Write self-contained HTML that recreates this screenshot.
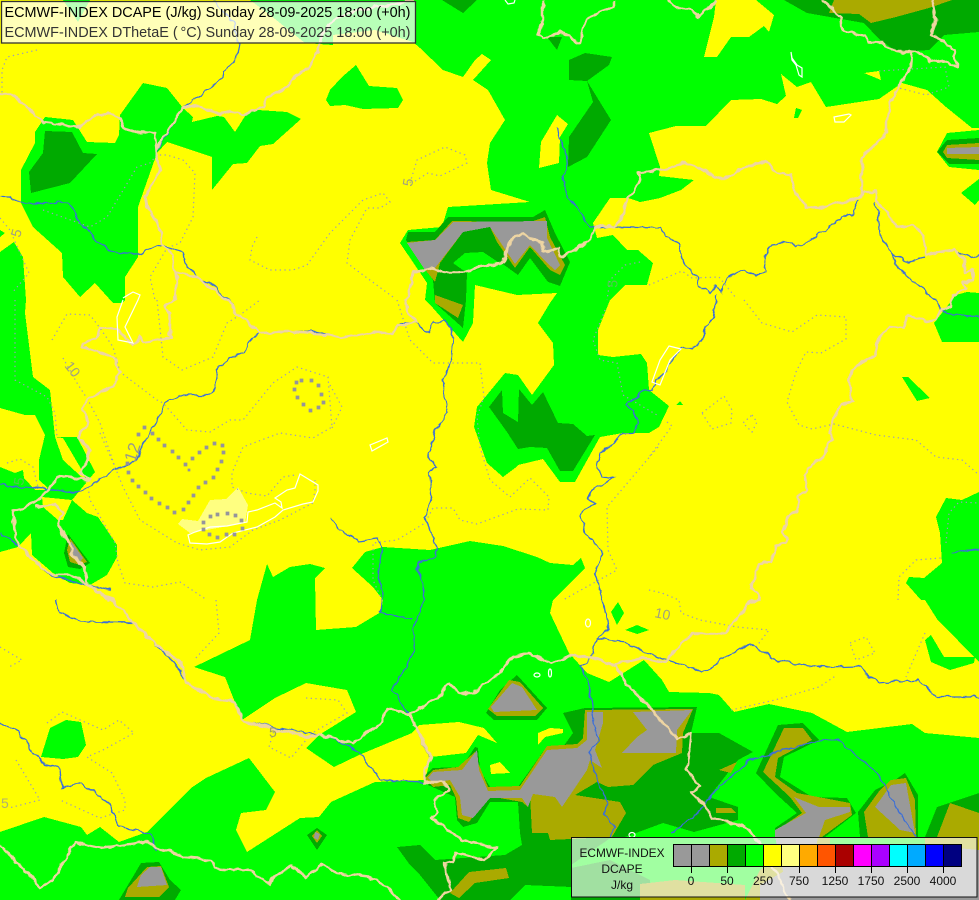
<!DOCTYPE html>
<html><head><meta charset="utf-8"><title>ECMWF-INDEX DCAPE</title>
<style>
html,body{margin:0;padding:0;background:#ff0;width:979px;height:900px;overflow:hidden}
svg{display:block;font-family:"Liberation Sans",sans-serif}
.m polygon,.m path{shape-rendering:crispEdges}
.b{fill:none;stroke:#eed5a2;stroke-width:2.5;stroke-linejoin:round}
.r{fill:none;stroke:#3a6ed8;stroke-width:1.3}
.w{fill:none;stroke:#fff;stroke-width:1.2}
.c{fill:none;stroke:#9a9ac0;stroke-width:1.2;stroke-dasharray:1.3 3.4}
.l{fill:#a0a080;font-size:14px}
</style></head><body>
<svg width="979" height="900" viewBox="0 0 979 900" xmlns="http://www.w3.org/2000/svg">
<defs><filter id="wig" filterUnits="userSpaceOnUse" x="0" y="0" width="979" height="900"><feTurbulence type="fractalNoise" baseFrequency="0.11" numOctaves="2" seed="4" result="n"/><feDisplacementMap in="SourceGraphic" in2="n" scale="6" xChannelSelector="R" yChannelSelector="G"/></filter></defs>
<rect width="979" height="900" fill="#ffff00"/>
<g class="m">
<g fill="#00ff00">
<polygon points="63,0 78,22 90,0"/>
<polygon points="250,0 979,0 979,128 972,128 946,107 927,90 902,83 879,99 826,107 811,82 797,87 781,74 786,96 777,104 761,99 731,100 706,126 676,126 649,133 660,167 659,176 694,180 681,190 660,198 640,202 628,198 610,198 593,223 597,238 613,235 627,250 638,250 653,263 647,285 625,285 610,300 598,330 598,355 613,357 641,354 647,363 649,390 669,406 659,427 649,433 623,433 600,437 575,482 560,482 543,459 518,465 515,468 503,477 487,463 474,427 477,407 505,373 518,375 532,395 554,365 553,343 538,323 550,303 557,293 517,295 475,285 473,323 463,342 433,308 425,300 427,283 400,243 408,230 442,227 448,207 530,202 491,190 487,163 490,143 505,120 488,90 473,80 491,60 482,54 475,60 463,77 443,70 420,48 413,42 375,30 333,35 333,45 305,43 270,15"/>
<polygon points="143,83 167,88 183,108 193,117 192,122 217,116 224,117 235,132 247,113 258,110 287,112 301,119 273,144 260,146 247,163 233,164 212,190 212,157 167,142 157,153 145,187 138,207 138,257 125,277 125,300 122,303 113,303 95,283 80,297 63,277 62,253 33,227 21,203 21,170 35,143 35,132 45,117 73,120 87,142 115,143 119,135 120,115"/>
<polygon points="330,90 342,77 356,65 369,86 397,88 403,100 398,108 363,109 345,105 330,106 326,100"/>
<polygon points="0,230 5,233 0,237"/>
<polygon points="0,252 14,242 23,257 26,300 25,313 33,377 50,390 55,437 77,437 95,472 72,500 87,513 98,517 117,545 117,557 107,575 90,585 70,583 53,573 32,555 31,533 18,547 0,552"/>
<polygon points="949,167 937,152 947,133 979,130 979,170"/>
<polygon points="961,193 979,179 979,200 975,205"/>
<polygon points="956,295 967,292 979,293 979,342 942,342 934,323"/>
<polygon points="902,377 908,377 930,398 917,401"/>
<polygon points="676,405 683,405 680,401"/>
<polygon points="796,108 802,110 798,118 794,118"/>
<polygon points="979,492 962,500 946,498 936,517 940,533 942,563 924,578 909,577 906,583 921,600 925,600 937,619 979,662"/>
<polygon points="925,640 931,635 944,657 975,657 974,663 950,670 931,662"/>
<polygon points="625,630 637,625 649,630 637,634"/>
<polygon points="618,602 624,613 617,625 611,612"/>
<polygon points="66,720 81,722 86,745 78,757 63,759 41,757 50,728"/>
<polygon points="0,832 44,817 81,827 87,835 100,827 119,842 147,832 191,788 206,778 249,758 275,792 266,810 241,813 236,830 247,852 300,818 319,817 331,802 375,782 425,780 431,757 466,753 478,735 497,743 484,728 459,722 419,725 412,733 359,755 334,767 306,748 319,735 356,712 347,690 306,683 275,698 242,720 225,677 194,667 250,640 257,600 267,564 273,577 290,567 310,564 325,568 315,578 316,630 356,627 381,612 383,600 373,587 352,568 365,552 383,547 430,550 470,541 503,546 537,557 550,563 573,565 581,558 585,568 560,593 553,600 550,613 569,653 587,673 609,682 644,660 662,680 669,692 709,693 719,695 734,712 769,704 812,713 847,732 912,724 925,733 979,738 979,900 0,900"/>
</g>
<g fill="#ffff00">
<polygon points="716,0 756,0 774,15 769,32 764,26 749,37 731,37 717,57 704,57 714,17"/>
<polygon points="557,115 568,124 560,137 559,163 539,168 541,142"/>
<polygon points="864,73 879,71 881,80"/>
<polygon points="55,437 63,438 80,467 87,482 63,460"/>
<polygon points="0,408 25,415 35,415 45,435 39,460 39,480 48,488 45,490 35,490 24,478 23,470 15,473 0,467"/>
<polygon points="42,497 72,500 63,520 58,520 43,507"/>
<polygon points="538,733 550,728 563,729 563,733 545,737 538,745"/>
<polygon points="490,765 500,762 510,773 491,774"/>
</g>
<polygon fill="#ffff80" points="238,487 248,505 245,523 190,533 178,524 182,519 198,521 210,500 226,499"/>
<g fill="#00aa00">
<polygon points="442,0 477,0 463,13"/>
<polygon points="547,37 562,37 557,50"/>
<polygon points="569,60 585,53 612,57 609,65 587,81 611,120 587,157 568,167 569,137 593,102 587,81 569,80"/>
<polygon points="784,0 979,0 979,32 944,35 929,50 897,52 879,39 864,23 807,13"/>
<polygon points="45,131 72,132 83,153 97,154 70,183 31,193 29,172 43,153"/>
<polygon points="937,152 947,140 979,138 979,164 949,164"/>
<polygon points="448,217 533,217 545,210 555,233 570,262 560,286 548,282 530,258 518,275 500,262 467,273 466,300 463,328 435,303 433,280 406,240 408,232 435,232"/>
<polygon points="489,407 502,390 503,413 518,422 519,389 532,405 543,392 558,423 573,424 587,436 595,435 573,471 560,471 547,448 530,447 518,449 507,432"/>
<polygon points="68,534 90,563 80,569 68,567 64,553"/>
<polygon points="517,675 547,708 537,720 494,720 486,713 500,690"/>
<polygon points="563,713 585,708 697,707 691,733 719,733 753,752 738,760 709,797 738,807 738,820 694,832 663,823 625,837 612,837 571,865 572,887 525,885 510,900 440,900 420,875 410,865 397,847 420,845 435,860 505,855 522,845 520,833 518,802 490,802 477,823 463,827 457,820 455,797 428,785 425,775 433,768 462,767 475,747 478,748 480,770 490,787 518,787 545,749 563,747 573,733"/>
<polygon points="571,868 610,860 650,880 650,900 571,900"/>
<polygon points="778,725 803,723 819,740 784,757 780,777 812,797 847,798 856,813 825,837 775,837 775,828 797,813 775,793 756,773"/>
<polygon points="905,773 918,795 918,837 860,837 858,812 875,790 895,780"/>
<polygon points="925,837 937,807 979,793 979,837"/>
<polygon points="141,863 159,862 170,880 181,890 175,900 119,900 131,880"/>
<polygon points="317,828 327,835 317,850 307,835"/>
</g>
<polygon fill="#00ff00" points="453,263 465,253 483,252 498,262 467,273"/>
<g fill="#aaaa00">
<polygon points="834,0 952,0 929,8 896,17 871,23 859,14 829,13"/>
<polygon points="947,145 979,143 979,160 947,158 943,152"/>
<polygon points="452,221 530,222 545,217 550,237 565,265 560,275 550,270 530,247 515,268 497,242 490,227 463,232 440,263 435,282 427,272 407,242 435,240"/>
<polygon points="435,295 463,305 458,318 435,303"/>
<polygon points="70,538 87,562 80,565 70,562 67,550"/>
<polygon points="509,680 520,682 543,708 535,716 497,716 488,709"/>
<polygon points="585,710 693,709 683,733 682,753 653,765 633,785 608,787 597,782 575,795 620,802 626,813 612,837 550,840 548,833 532,833 530,795 528,807 522,802 488,796 469,822 458,818 456,798 450,785 433,787 425,778 433,770 458,767 475,752 477,760 488,787 520,786 547,746 577,744 583,738"/>
<polygon points="469,872 506,868 509,878 475,883 459,898 450,893"/>
<polygon points="716,808 731,808 736,813 716,813"/>
<polygon points="719,770 737,762 731,773"/>
<polygon points="784,728 803,728 812,740 778,758 775,777 797,793 850,803 852,815 822,837 777,837 780,828 802,813 790,797 763,772"/>
<polygon points="891,780 906,778 915,800 916,837 868,837 864,812 880,790"/>
<polygon points="937,837 950,803 979,813 979,837"/>
<polygon points="147,867 161,866 169,887 159,897 125,897 128,888"/>
<polygon points="317,830 322,836 317,843 312,836"/>
<polygon points="745,900 760,870 790,850 775,837 830,837 830,900"/>
<polygon points="640,884 675,880 745,885 745,900 640,900"/>
<polygon points="925,837 979,837 979,900 925,900"/>
</g>
<g fill="#999999">
<polygon points="947,148 979,147 979,154 947,154"/>
<polygon points="453,222 547,221 547,238 560,265 555,270 547,263 530,245 515,264 490,227 463,232 435,268 425,270 407,243 435,240"/>
<polygon points="71,541 83,558 80,562 70,555"/>
<polygon points="512,683 522,687 537,710 494,712 491,707"/>
<polygon points="477,750 479,770 488,791 520,790 547,750 577,748 587,740 587,712 603,712 603,723 595,750 602,768 590,760 587,770 562,807 555,797 533,794 528,807 522,798 490,798 473,818 462,815 460,797 450,780 433,783 428,778 433,772 462,770"/>
<polygon points="633,712 692,710 677,730 676,753 622,753 637,737 647,730"/>
<polygon points="794,797 819,807 850,807 850,812 825,820 819,837 775,837 775,830 806,813"/>
<polygon points="891,785 906,783 915,833 900,830 875,807"/>
<polygon points="150,867 161,867 167,885 137,887 141,875"/>
<polygon points="315,832 320,834 318,840 314,838"/>
<polygon points="775,837 818,837 810,880 785,880"/>
<polygon points="760,885 800,862 860,845 925,845 979,850 979,900 760,900"/>
</g>
</g>
<g class="c">
<polyline points="37,50 7,57 2,70 2,93"/>
<polyline points="43,210 90,227 107,217 137,167 150,163 157,155 167,155 183,160 195,173 193,217 180,243 167,248 150,277 155,300"/>
<polyline points="257,237 252,247 250,260 270,270 293,270 307,265 330,233 363,200 383,193 390,202 380,208 367,208 350,240 347,263 363,275 393,297"/>
<polyline points="410,183 417,160 445,147 465,155 467,163 440,176 428,173 412,183"/>
<polyline points="640,262 625,265 610,280 607,300"/>
<polyline points="879,71 945,67 949,87 926,95 899,88"/>
<polyline points="649,285 682,271 692,278 719,277 736,298"/>
<polyline points="52,340 67,314 90,315 100,328 113,347 120,372 157,400 163,403 187,430 210,432 230,420 243,420 273,383 297,367 328,377 332,427 313,438 280,433 243,447 232,473 232,487 247,493 267,496 283,477 295,475"/>
<polyline points="157,300 163,357 182,370 213,357 227,323 240,315 260,300"/>
<polyline points="100,433 115,467 123,487 140,520 177,543 200,550 230,547 253,530 280,520 313,503 315,490 315,480"/>
<polyline points="63,358 77,383 88,400 100,423 115,467"/>
<polyline points="88,487 90,500 102,520 115,543 118,563 125,583 153,587 180,582 207,600"/>
<polyline points="0,218 10,230 20,253 29,273 12,293"/>
<polyline points="15,300 15,380 47,397 55,413 57,437"/>
<polyline points="7,463 20,459 33,467 38,487"/>
<polyline points="397,300 410,340 433,363 480,363 484,397 477,417 480,447 490,480 510,497 530,478 549,497 548,510 518,509 477,524 460,520 453,508 433,508 425,523 397,540 373,543 373,580 382,600"/>
<polyline points="330,385 342,407 332,428"/>
<polyline points="605,310 593,340 600,360 617,363 623,395 657,415"/>
<polyline points="658,447 607,507 608,550 617,570 563,600"/>
<polyline points="667,422 672,426 649,457"/>
<polyline points="744,300 762,323 792,332 817,315 846,317 846,339 821,353 806,352 796,372 787,402 799,425 812,429 834,424 876,435 916,440 936,457 962,460 979,475"/>
<polygon points="702,413 724,396 732,410 731,423 712,429"/>
<polygon points="752,415 757,422 752,432 743,423"/>
<polyline points="898,600 899,577 916,560 941,558"/>
<polyline points="946,543 949,513 959,502 979,503"/>
<polyline points="649,590 662,593 679,600 681,613 700,620 737,627 769,630 756,647"/>
<polyline points="216,600 219,633 194,660"/>
<polyline points="0,647 22,660 9,667"/>
<polyline points="47,723 62,712 103,730 119,720 134,733 103,750 87,757 112,773 125,800 125,810 100,818 60,800"/>
<polyline points="16,760 40,800 9,808"/>
<polygon points="850,643 866,637 875,653 856,660"/>
<polyline points="925,633 906,677"/>
<polyline points="731,710 775,700 819,687 837,675"/>
<polyline points="306,698 338,700 347,713 312,733 291,758 269,747 275,727"/>
</g>
<g filter="url(#wig)">
<g class="r">
<polyline points="213,0 233,22 239,43 236,60 223,72 222,78 197,98 183,108 163,140 157,153"/>
<polyline points="0,197 10,197 20,203 70,203 80,223 100,243 113,252 138,254 162,245 183,252 185,263 197,277 210,283 227,298 237,313 260,333 320,332 330,335"/>
<polyline points="260,333 253,338 245,352 230,357 217,370 213,390 208,395 180,395 165,403 155,423 153,428 143,443 137,460 115,470 87,488 80,492 50,490 0,485"/>
<polyline points="0,533 20,547 33,560 53,577 87,585 110,590"/>
<polyline points="56,600 59,613 81,622 134,623 150,640 175,663 187,683 212,698 234,702 244,722 319,735 341,742 362,755 381,780 425,782"/>
<polyline points="0,723 19,732 41,763 59,767 62,788 81,783 109,803 119,827 150,833 156,850"/>
<polyline points="330,518 340,530 360,541 377,538 382,548 378,573 383,593 381,612 412,620"/>
<polyline points="437,548 425,517 432,497 429,473 436,467 428,453 437,427 448,412 442,385 451,358 453,332 445,321 433,322 428,332 418,323 402,322 398,326"/>
<polyline points="437,548 435,557 418,563 417,570 421,577 425,600 412,630 415,650 392,690 410,715 430,757"/>
<polyline points="557,129 560,140 565,150 567,170 563,178 568,197 583,217 590,227 613,227 660,228 666,237 679,243 682,260 697,278 699,287 711,292 716,285 722,293 727,277 744,270 756,275 767,272 764,257 772,245 792,242 797,247 826,230 842,217 852,215 859,200"/>
<polyline points="876,203 881,237 892,253 909,263 924,257"/>
<polyline points="892,253 899,270 936,300 944,312 962,315 979,317"/>
<polyline points="959,253 974,258 979,255"/>
<polyline points="716,293 716,300 714,317 704,328 702,342 692,348 681,348 669,365 665,373 656,380 652,390 643,390 637,398 625,405 633,410 638,423 633,433 622,433 613,443 600,453 597,463 602,478 613,478 592,490 588,500 595,502 583,512 580,517 588,537 603,553 595,573 603,600 609,630 597,638 591,658 581,667 590,690 593,713 598,742 590,753 594,773 595,775 607,802 605,815 615,827 610,837"/>
<polyline points="597,638 625,642 647,653 662,658 703,672 750,643 775,660 806,665 825,668 859,667 878,683 919,680 937,697 979,697"/>
<polyline points="750,760 812,742 837,740 875,770 900,813 916,837"/>
<polyline points="750,760 719,787 694,817 672,833"/>
<polyline points="952,553 969,550 979,549"/>
</g>
<g class="b">
<polyline points="0,95 13,95 27,107 43,122 80,127 97,115 107,113 120,118 123,128 138,133 155,133 157,150 163,137 183,108 197,105 220,115 230,110 243,115 263,107 267,97 283,90 297,75 310,68 318,50 323,33 333,20 350,12 415,0"/>
<polyline points="157,150 160,170 145,197 147,208 153,217 160,230 162,245 173,255 175,273 197,276 210,287 227,300 237,313 248,322 260,333 287,332 300,333 330,335 340,338 373,332 392,333 398,325 417,322 408,313 406,300 410,287 413,273 430,268 445,272 467,272 477,267 503,263 510,240 522,233 530,238 543,242 543,252 558,249 560,258 577,248 590,240 595,228 603,225 613,228 623,213 628,198 640,182 638,173 660,170 684,163 699,168 722,180 737,172 749,165 766,162 777,173 791,175 796,193 806,207 819,208 862,197 864,192 876,192 877,200 887,213 896,227 912,225 922,233 926,255 954,250 964,260 965,273 972,270 974,280 962,282 966,287 951,297 951,307 942,310 936,320 926,322 907,315 904,328 889,327 879,338 874,357 866,360 852,370 849,383 852,402 841,405 834,418 829,433 832,440 826,447 824,458 814,462 804,475 807,490 799,497 797,510 787,517 782,533 789,538 776,547 771,562 759,563 752,587 759,600 750,602 744,610 725,633 694,633 681,643 666,662 644,658 612,665 600,660 572,655 550,663 528,653 512,657 500,673 472,693 459,693 450,683 437,698 409,715 387,708 381,723 353,743 319,735 309,737 244,722 234,702 212,698 187,683 181,663 150,640 112,600 88,585 73,575 53,575 33,560 20,547 15,537 13,512 35,503 50,488 58,477 90,480 80,472 85,463 90,450 77,438 88,423 82,408 87,398 113,387 120,372 113,357 82,347 83,343 98,337 100,328 117,330 125,337 133,345 140,337 143,342 173,338 170,335 170,313 165,307 175,300 177,283 175,273"/>
<polyline points="35,507 55,505 63,513 58,520 62,533 72,548 70,553 85,567 88,585 110,600"/>
<polyline points="862,197 862,157 887,133 887,122 891,100 897,87 911,68 912,52 922,53 929,62 942,60 957,67 954,50 942,40 932,35 936,20 932,0"/>
<polyline points="912,52 896,52 882,43 869,42 866,36 842,31 841,17 822,0"/>
<polyline points="543,0 543,20 538,35 543,40 560,32 580,43 587,18 613,7 613,0"/>
<polyline points="669,0 677,8 689,8 699,17 716,2"/>
<polyline points="612,665 616,667 625,682 650,707 678,740 691,733 687,770 700,787 691,793 703,803 712,818 747,828 759,842 775,870 790,900"/>
<polyline points="0,845 41,887 53,880 75,843 100,848 144,842 184,857 212,860 216,868 250,870 269,883 291,865 306,877 322,865 337,873 369,877 387,887 400,900"/>
<polyline points="409,713 431,757 425,770 425,782 444,782 450,790 434,800 437,813 431,817 462,840 497,848 484,860 456,852 453,862 444,863 450,890 437,900"/>
</g>
</g>
<g class="w">
<polygon points="791,52 792,58 797,65 802,68 802,77 799,75 796,65 792,60"/>
<polygon points="834,117 849,114 851,115 844,122 835,122"/>
<polyline points="505,0 508,4 514,3 515,0"/>
<polygon points="370,445 387,438 388,442 372,451"/>
<polygon points="300,474 318,485 318,491 313,502 303,504 283,510 275,517 257,527 233,533 220,542 207,544 190,543 188,535 195,532 210,527 227,526 247,522 248,512 257,510 275,503 282,508 281,502 275,498 287,490 295,488"/>
<polyline points="123,298 133,292 140,295 138,300 125,327 133,343 118,340 117,317 123,300"/>
<polygon points="669,346 681,349 670,360 660,385 652,382 660,360"/>
<ellipse cx="588" cy="623" rx="2.5" ry="4"/>
<ellipse cx="537" cy="675" rx="3" ry="2"/>
<ellipse cx="550" cy="673" rx="1.5" ry="4"/>
<ellipse cx="632" cy="835" rx="3" ry="2.5"/>
</g>
<path fill="#94949c" stroke="#94949c" stroke-width=".7" d="M143 426h3v3h-3zM137 433h3v3h-3zM151 432h3v3h-3zM157 438h3v3h-3zM163 444h3v3h-3zM171 450h3v3h-3zM177 456h3v3h-3zM184 463h3v3h-3zM188 469h2v2h-2zM191 457h3v3h-3zM198 451h3v3h-3zM205 446h3v3h-3zM213 442h3v3h-3zM221 444h3v3h-3zM222 451h3v3h-3zM220 460h3v3h-3zM216 468h3v3h-3zM212 476h3v3h-3zM204 481h3v3h-3zM197 486h3v3h-3zM192 494h3v3h-3zM187 501h3v3h-3zM182 508h3v3h-3zM173 511h3v3h-3zM166 506h3v3h-3zM158 502h3v3h-3zM150 497h3v3h-3zM144 491h3v3h-3zM137 485h3v3h-3zM131 479h3v3h-3zM127 471h3v3h-3zM126 462h3v3h-3zM295 381h3v3h-3zM300 379h3v3h-3zM310 379h3v3h-3zM317 384h3v3h-3zM320 393h3v3h-3zM322 401h3v3h-3zM317 406h3v3h-3zM309 409h3v3h-3zM302 403h3v3h-3zM296 396h3v3h-3zM293 388h3v3h-3zM209 515h3v3h-3zM216 513h3v3h-3zM226 512h3v3h-3zM234 514h3v3h-3zM240 519h3v3h-3zM241 527h3v3h-3zM233 533h3v3h-3zM225 533h3v3h-3zM216 536h3v3h-3zM208 533h3v3h-3zM202 528h3v3h-3zM202 521h3v3h-3z"/>
<g>
<text class="l" transform="translate(20,238) rotate(-75)">5</text>
<text class="l" transform="translate(412,187) rotate(-80)">5</text>
<text class="l" transform="translate(64,366) rotate(52)">10</text>
<text class="l" transform="translate(135,463) rotate(-72)" style="fill:#9a9a88;font-size:17px">12</text>
<text class="l" transform="translate(654,617) rotate(12)">10</text>
<text class="l" x="1" y="808" style="fill:#b0b070">5</text>
<text class="l" transform="translate(269,737)" style="fill:#a0a060">5</text>
<text class="l" transform="translate(23,486) rotate(-80)" style="fill:#50c850">5</text>
<text class="l" transform="translate(617,288) rotate(-85)" style="fill:#50c850">5</text>
</g>
<rect x="1.5" y="1.5" width="414" height="41.5" fill="#fff" fill-opacity=".72" stroke="#333" stroke-width="1.3"/>
<text x="4.5" y="17" font-size="14.5" fill="#000" textLength="406" lengthAdjust="spacingAndGlyphs">ECMWF-INDEX DCAPE (J/kg) Sunday 28-09-2025 18:00 (+0h)</text>
<text x="4.5" y="37" font-size="14.5" fill="#333" textLength="406" lengthAdjust="spacingAndGlyphs">ECMWF-INDEX DThetaE (&#8201;°C) Sunday 28-09-2025 18:00 (+0h)</text>
<rect x="571.5" y="837.5" width="405.5" height="59.5" fill="#fff" fill-opacity=".63" stroke="#111" stroke-width="1"/>
<g class="m" stroke="#000" stroke-width="1">
<rect x="673.5" y="844.5" width="18" height="22" fill="#999999"/>
<rect x="691.5" y="844.5" width="18" height="22" fill="#999999"/>
<rect x="709.5" y="844.5" width="18" height="22" fill="#aaaa00"/>
<rect x="727.5" y="844.5" width="18" height="22" fill="#00aa00"/>
<rect x="745.5" y="844.5" width="18" height="22" fill="#00ff00"/>
<rect x="763.5" y="844.5" width="18" height="22" fill="#ffff00"/>
<rect x="781.5" y="844.5" width="18" height="22" fill="#ffff80"/>
<rect x="799.5" y="844.5" width="18" height="22" fill="#ffaa00"/>
<rect x="817.5" y="844.5" width="18" height="22" fill="#ff5500"/>
<rect x="835.5" y="844.5" width="18" height="22" fill="#aa0000"/>
<rect x="853.5" y="844.5" width="18" height="22" fill="#ff00ff"/>
<rect x="871.5" y="844.5" width="18" height="22" fill="#aa00ff"/>
<rect x="889.5" y="844.5" width="18" height="22" fill="#00ffff"/>
<rect x="907.5" y="844.5" width="18" height="22" fill="#00aaff"/>
<rect x="925.5" y="844.5" width="18" height="22" fill="#0000ff"/>
<rect x="943.5" y="844.5" width="18" height="22" fill="#000080"/>
<path d="M691.5 866v7M727.5 866v7M763.5 866v7M799.5 866v7M835.5 866v7M871.5 866v7M907.5 866v7M943.5 866v7" fill="none"/>
</g>
<g font-size="12" fill="#111" text-anchor="middle">
<text x="622" y="857" textLength="85" lengthAdjust="spacingAndGlyphs">ECMWF-INDEX</text>
<text x="622" y="873">DCAPE</text>
<text x="622" y="889">J/kg</text>
<text x="691" y="885">0</text>
<text x="727" y="885">50</text>
<text x="763" y="885">250</text>
<text x="799" y="885">750</text>
<text x="835" y="885">1250</text>
<text x="871" y="885">1750</text>
<text x="907" y="885">2500</text>
<text x="943" y="885">4000</text>
</g>
</svg>
</body></html>
